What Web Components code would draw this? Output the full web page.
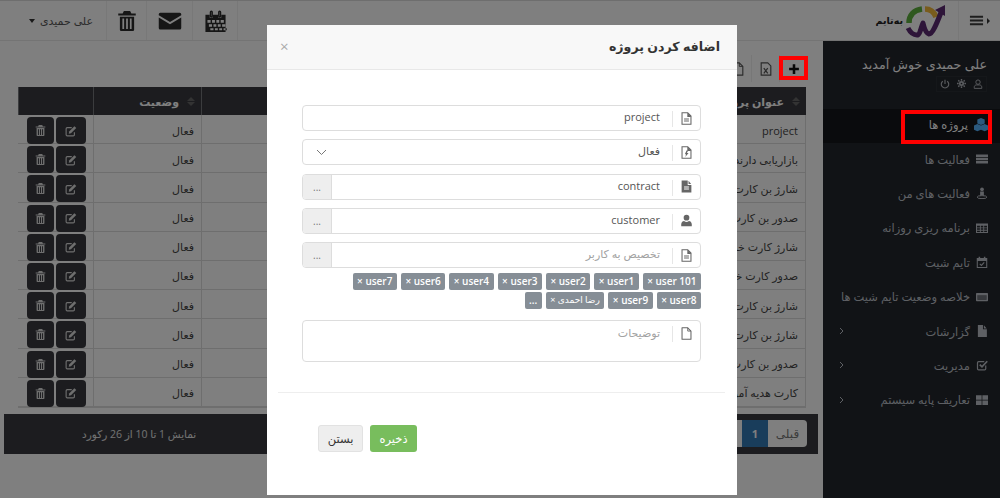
<!DOCTYPE html>
<html lang="fa">
<head>
<meta charset="utf-8">
<title>پروژه ها</title>
<style>
    html, body { margin: 0; height: 498px; overflow: hidden; }
    body {
        background: #fff;
        color: #333;
        font: 12px "Open Sans", "DejaVu Sans", sans-serif;
        direction: rtl;
        display: flex;
        flex-direction: column;
    }
    .layout { display: flex; flex: 1; min-height: 0; }
</style>
</head>
<body>
<top-bar></top-bar>
<div class="layout">
    <side-nav>
        <nav-item icon="cubes" active>پروژه ها</nav-item>
        <nav-item icon="tasks">فعالیت ها</nav-item>
        <nav-item icon="person">فعالیت های من</nav-item>
        <nav-item icon="table">برنامه ریزی روزانه</nav-item>
        <nav-item icon="calcheck">تایم شیت</nav-item>
        <nav-item icon="card">خلاصه وضعیت تایم شیت ها</nav-item>
        <nav-item icon="filled" arrow>گزارشات</nav-item>
        <nav-item icon="check" arrow>مدیریت</nav-item>
        <nav-item icon="grid" arrow>تعاریف پایه سیستم</nav-item>
    </side-nav>
    <main-panel>
        <data-table>
            <table-row>project</table-row>
            <table-row>بازاریابی دارندگان کارت</table-row>
            <table-row>شارژ بن کارت هدیه</table-row>
            <table-row>صدور بن کارت هدیه</table-row>
            <table-row>شارژ کارت خرید</table-row>
            <table-row>صدور کارت خرید</table-row>
            <table-row>شارژ بن کارت هدیه</table-row>
            <table-row>شارژ بن کارت هدیه</table-row>
            <table-row>صدور بن کارت هدیه</table-row>
            <table-row>کارت هدیه آموزش</table-row>
        </data-table>
    </main-panel>
</div>
<project-modal>
    <form-field icon="doc" value="project"></form-field>
    <form-field icon="docbolt" value="فعال" select></form-field>
    <form-field icon="docfill" value="contract" more></form-field>
    <form-field icon="user" value="customer" more></form-field>
    <form-field icon="doc" placeholder="تخصیص به کاربر" more></form-field>
    <tag-list>
        <tag-chip>× user 101</tag-chip>
        <tag-chip>× user1</tag-chip>
        <tag-chip>× user2</tag-chip>
        <tag-chip>× user3</tag-chip>
        <tag-chip>× user4</tag-chip>
        <tag-chip>× user6</tag-chip>
        <tag-chip>× user7</tag-chip>
        <tag-chip>× user8</tag-chip>
        <tag-chip>× user9</tag-chip>
        <tag-chip style="font-size:9px;font-weight:400">× رضا احمدی</tag-chip>
        <tag-chip>...</tag-chip>
    </tag-list>
    <form-field icon="page" placeholder="توضیحات" area></form-field>
</project-modal>
<red-mark x="779" y="56" w="29" h="24"></red-mark>
<red-mark x="901" y="110" w="91" h="34"></red-mark>

<script>
const ICONS = {
    calendar: '<path fill="currentColor" d="M1 4h3v2h2V4h4v2h2V4h3v12H1zM2.400 7.600v2h2.200v-2zm3.200 0v2h2v-2zm3 0v2h2v-2zm3 0v2h2.200v-2zm-8.200 3v1.800h2.200v-1.800zm3.200 0v1.800h2v-1.800zm3 0v1.800h2v-1.800zm3 0v1.800h2.200v-1.800zm-8.200 2.800v1.400h2.200v-1.400zm3.200 0v1.400h2v-1.400zm3 0v1.400h2v-1.400zm3 0v1.400h2.200v-1.400z"/><rect x="4.500" y="1.500" width="1.200" height="4" rx=".6" fill="none" stroke="currentColor"/><rect x="10.300" y="1.500" width="1.200" height="4" rx=".6" fill="none" stroke="currentColor"/>',
    mail: '<path fill="currentColor" d="M1.500 2.500h13a1 1 0 0 1 1 1v.6L8 8.700.5 4.100v-.6a1 1 0 0 1 1-1zM.5 5.600 8 10.200l7.500-4.600v7a1 1 0 0 1-1 1h-13a1 1 0 0 1-1-1z"/>',
    trash: '<path fill="currentColor" d="M5.500 0h5l1 2H15v1.600H1V2h3.500zM2.300 4.500h11.400V15a1 1 0 0 1-1 1H3.300a1 1 0 0 1-1-1zm2 1.500v8.400h1.400V6zm3 0v8.400h1.400V6zm3 0v8.400h1.400V6z"/>',
    bars: '<path fill="currentColor" d="M1 3h14v2H1zm0 4h14v2H1zm0 4h14v2H1z"/>',
    plus: '<path fill="currentColor" d="M6.300 1.500h3.400v4.800h4.800v3.400H9.700v4.800H6.300V9.700H1.500V6.300h4.800z"/>',
    xls: '<path fill="none" stroke="currentColor" stroke-width="1.300" d="M2.500 1h7.500l3.500 3.500V15h-11z"/><path fill="none" stroke="currentColor" stroke-width="1.400" d="M5.500 7l4.500 6M10 7l-4.500 6"/>',
    edit: '<path fill="none" stroke="currentColor" stroke-width="1.500" d="M12.500 9.500V13a1.500 1.500 0 0 1-1.500 1.500H3A1.500 1.500 0 0 1 1.500 13V5A1.500 1.500 0 0 1 3 3.500h6"/><path fill="currentColor" d="M12.500 1.500l2.500 2.500-7 7-3 .5.500-3z"/>',
    doc: '<path fill="none" stroke="currentColor" stroke-width="1.300" d="M2.500 1h7l4 4v10h-11z"/><path fill="currentColor" d="M9 1l5 5H9zM5 8h6v1.200H5zm0 2.500h6v1.200H5z"/>',
    docbolt: '<path fill="none" stroke="currentColor" stroke-width="1.300" d="M2.500 1h7l4 4v10h-11z"/><path fill="currentColor" d="M9 1l5 5H9zM8 5.500h2l-1.500 3h2L6.500 13.500l1-3.500H6z"/>',
    docfill: '<path fill="currentColor" d="M2 .5h7.500V6H14v9.500H2zM10.500.8 13.700 5h-3.200zM5 8v1.200h6V8zm0 2.500v1.200h6v-1.200z"/>',
    page: '<path fill="none" stroke="currentColor" stroke-width="1.300" stroke-linejoin="round" d="M2.500 1h7l4 4v10h-11z"/><path fill="none" stroke="currentColor" stroke-width="1.100" d="M9.500 1v4h4"/>',
    user: '<circle cx="8" cy="4.500" r="3.500" fill="currentColor"/><path fill="currentColor" d="M1.500 15v-2.500C1.500 10 3.500 8.500 5 8.500c1 .8 2 1.200 3 1.200s2-.4 3-1.200c1.500 0 3.500 1.500 3.500 4V15z"/>',
    userline: '<circle cx="8" cy="5" r="3.500" fill="none" stroke="currentColor" stroke-width="1.500"/><path fill="none" stroke="currentColor" stroke-width="1.500" d="M2 15v-2c0-2 1.500-3.500 3.500-3.500h5c2 0 3.500 1.500 3.500 3.500v2z"/>',
    gear: '<circle cx="8" cy="8" r="3" fill="none" stroke="currentColor" stroke-width="3"/><path stroke="currentColor" stroke-width="2.500" d="M8 0v3M8 13v3M0 8h3M13 8h3M2.300 2.300l2 2M11.700 11.700l2 2M13.700 2.300l-2 2M4.300 11.700l-2 2"/>',
    power: '<path fill="none" stroke="currentColor" stroke-width="1.800" d="M11.500 3.500a6 6 0 1 1-7 0M8 1v7"/>',
    cubes: '<path fill="currentColor" d="M8 0l4.200 1.800v4.400L8 8 3.800 6.200V1.800zM3.800 6.800l4.200 1.800v4.800L3.800 15.200-.2 13.400V8.600zM12.200 6.800l4 1.800v4.800l-4 1.800-4.200-1.800V8.600z"/>',
    tasks: '<path fill="currentColor" d="M0 2h16v3.400H0zm0 4.300h16v3.400H0zm0 4.300h16V14H0z"/>',
    person: '<circle cx="8" cy="3" r="2.500" fill="currentColor"/><path fill="currentColor" d="M5.500 6h5v5.500h-1.500v-1h-2v1H5.500z"/><ellipse cx="8" cy="13.500" rx="6.500" ry="2" fill="none" stroke="currentColor" stroke-width="1.300"/>',
    table: '<path fill="currentColor" d="M0 2h16v12.500H0zm1.400 3v2.200h3.800V5zm5 0v2.200h3.300V5zm4.500 0v2.200h3.700V5zM1.400 8.400v2h3.800v-2zm5 0v2h3.300v-2zm4.500 0v2h3.700v-2zM1.400 11.500v1.700h3.800v-1.700zm5 0v1.700h3.300v-1.700zm4.500 0v1.700h3.700v-1.700z"/>',
    calcheck: '<path fill="currentColor" d="M1 2.500h2.500V1h2v1.500h5V1h2v1.500H15V16H1zm1.400 4.300v7.800h11.200V6.800z"/><path fill="none" stroke="currentColor" stroke-width="1.500" d="M5 10.500l2.200 2 3.800-4"/>',
    card: '<path fill="currentColor" d="M1 2.500h14a1 1 0 0 1 1 1v9a1 1 0 0 1-1 1H1a1 1 0 0 1-1-1v-9a1 1 0 0 1 1-1zm1 3v6h12v-6z"/><path fill="currentColor" opacity=".5" d="M2 5.500h12v6H2z"/>',
    filled: '<path fill="currentColor" d="M2.500 0h6.800v5.700h5.200V16h-12zM10.500.3l3.800 4.200h-3.800z"/>',
    check: '<path fill="none" stroke="currentColor" stroke-width="1.600" d="M13 8.500V13a1.500 1.500 0 0 1-1.500 1.500h-8A1.500 1.500 0 0 1 2 13V5a1.500 1.500 0 0 1 1.500-1.500H11"/><path fill="none" stroke="currentColor" stroke-width="2.300" d="M5 7.500l3 3L15 3"/>',
    grid: '<path fill="currentColor" d="M0 1.500h7.500V7.500H0zm8.500 0H16V7.500H8.500zM0 8.500h7.500v6H0zm8.500 0H16v6H8.500z"/>'
};

// one svg glyph out of the table above
customElements.define('app-icon', class extends HTMLElement {
    connectedCallback() {
        const size = this.getAttribute('size') || 14;
        this.attachShadow({ mode: 'open' }).innerHTML = `
            <style>
                :host { display: inline-flex; flex: none; line-height: 0; }
            </style>
            <svg width="${size}" height="${size}" viewBox="0 0 16 16">${ICONS[this.getAttribute('name')] || ''}</svg>
        `;
    }
});

customElements.define('top-bar', class extends HTMLElement {
    constructor() {
        super();
        this.attachShadow({ mode: 'open' }).innerHTML = `
            <style>
                :host {
                    display: flex;
                    flex: none;
                    height: 39px;
                    background: #fff;
                    border-top: 1px solid #ddd;
                    border-bottom: 1px solid #e8e8e8;
                    color: #3c3c3c;
                }
                .burger {
                    width: 42px; box-sizing: border-box; display: flex; align-items: center; gap: 3px;
                    border-left: 1px solid #f0f0f0; padding-right: 10px;
                }
                .caret { border: 3px solid transparent; }
                .burger .caret { border-left-color: #333; border-right-width: 0; }
                .logo { display: flex; align-items: center; gap: 1px; margin-right: 12px; }
                .logo span { font-size: 9.500px; font-weight: 700; color: #222; }
                .tools { display: flex; margin-right: auto; }
                .tool {
                    display: flex; align-items: center; justify-content: center; box-sizing: border-box;
                    border-right: 1px solid #f0f0f0; color: #2c2c2c;
                }
                .me {
                    display: flex; align-items: center; gap: 5px; width: 107px;
                    box-sizing: border-box; padding-right: 13px;
                    border-right: 1px solid #f0f0f0; font-size: 11px; color: #555;
                }
                .me .caret { border-top: 4px solid #333; border-bottom-width: 0; }
            </style>
            <div class="burger"><i class="caret"></i><app-icon name="bars" size="15"></app-icon></div>
            <div class="logo">
                <svg width="42" height="34" viewBox="0 0 42 34">
                    <path fill="none" stroke="#5fb03f" stroke-width="5.500" d="M5 19C5 11 10 6 18 5"/>
                    <path fill="none" stroke="#f2b93a" stroke-width="5.500" d="M21 5c5 0 9 3 11 8"/>
                    <path fill="none" stroke="#5c2a72" stroke-width="5" stroke-linejoin="round" d="M4 24c2 4 5 7 9 7 3 0 4-8 6-12 1 4 2 10 6 11 4 0 9-14 13-24"/>
                    <path fill="#5c2a72" d="M31 6l10-5 0 11z"/>
                </svg>
                <span>به‌تایم</span>
            </div>
            <div class="tools">
                <div class="tool" style="width:45px"><app-icon name="calendar" size="23"></app-icon></div>
                <div class="tool" style="width:46px"><app-icon name="mail" size="24"></app-icon></div>
                <div class="tool" style="width:40px"><app-icon name="trash" size="20"></app-icon></div>
                <div class="me"><span>علی حمیدی</span><i class="caret"></i></div>
            </div>
        `;
    }
});

customElements.define('side-nav', class extends HTMLElement {
    constructor() {
        super();
        this.attachShadow({ mode: 'open' }).innerHTML = `
            <style>
                :host {
                    display: block;
                    flex: none;
                    width: 177px;
                    background: #23262c;
                    color: #d8dde4;
                }
                .who { padding: 14px 13px 0 0; height: 54px; }
                .who b { display: block; font-size: 12.700px; font-weight: 400; color: #fff; line-height: 18px; }
                .links {
                    display: inline-flex; gap: 7px; margin-top: 3px; padding: 2px 3px;
                    border: 1px solid #2b2e35; color: #b5b9c0;
                }
            </style>
            <div class="who">
                <b>علی حمیدی خوش آمدید</b>
                <div class="links">
                    <app-icon name="userline" size="10"></app-icon>
                    <app-icon name="gear" size="9"></app-icon>
                    <app-icon name="power" size="10"></app-icon>
                </div>
            </div>
            <slot></slot>
        `;
    }
});

customElements.define('nav-item', class extends HTMLElement {
    connectedCallback() {
        this.attachShadow({ mode: 'open' }).innerHTML = `
            <style>
                :host {
                    display: flex;
                    align-items: center;
                    gap: 6px;
                    height: 34.400px;
                    box-sizing: border-box;
                    padding: 0 12px 3px 0;
                    font-size: 11.500px;
                    color: #bcc0c8;
                }
                :host([active]) { background: #14161a; color: #fff; }
                :host([active]) app-icon { color: #56b4ff; }
                .arrow { margin-right: auto; margin-left: 16px; display: flex; }
            </style>
            <app-icon name="${this.getAttribute('icon')}" size="${this.hasAttribute('active') ? 14 : 12}"></app-icon>
            <slot></slot>
            ${this.hasAttribute('arrow') ? '<span class="arrow"><svg width="5" height="8" viewBox="0 0 5 8"><path fill="none" stroke="currentColor" d="M1 1l3 3-3 3"/></svg></span>' : ''}
        `;
    }
});

customElements.define('main-panel', class extends HTMLElement {
    constructor() {
        super();
        this.attachShadow({ mode: 'open' }).innerHTML = `
            <style>
                :host {
                    display: flex;
                    flex-direction: column;
                    flex: 1;
                    min-width: 0;
                    padding: 14px 5px 0 4px;
                }
                .bar { display: flex; height: 27px; margin: 0 11px 5px 0; }
                .btn {
                    width: 28px; box-sizing: border-box; display: flex; align-items: center; justify-content: center;
                    border-left: 1px solid #eee; color: #555;
                }
                .btn.add { color: #111; }
                .foot {
                    display: flex; align-items: center; justify-content: space-between;
                    height: 40px; margin-top: 6px; padding: 0 11px 0 0;
                    background: #38393f; color: #fff;
                }
                .pages { display: flex; height: 27px; border-radius: 4px; background: #fff; overflow: hidden; color: #333; }
                .pages span { display: flex; align-items: center; justify-content: center; }
                .pages .prev { width: 39px; color: #777; }
                .pages .cur { width: 26px; background: #337ab7; color: #fff; font-weight: 700; font-size: 11px; }
                .pages .next { width: 150px; }
                .info { margin-left: 78px; font-size: 10.500px; color: #e5e5e5; }
            </style>
            <div class="bar">
                <div class="btn add"><app-icon name="plus" size="12"></app-icon></div>
                <div class="btn"><app-icon name="xls" size="14"></app-icon></div>
                <div class="btn"><app-icon name="page" size="14"></app-icon></div>
            </div>
            <slot></slot>
            <div class="foot">
                <div class="pages"><span class="prev">قبلی</span><span class="cur">1</span><span class="next"></span></div>
                <span class="info">نمایش 1 تا 10 از 26 رکورد</span>
            </div>
        `;
    }
});

customElements.define('data-table', class extends HTMLElement {
    constructor() {
        super();
        this.attachShadow({ mode: 'open' }).innerHTML = `
            <style>
                :host { display: block; margin: 0 12px 0 14px; border-bottom: 1px solid #ddd; }
                .head {
                    display: grid;
                    grid-template-columns: 1fr 108px 75px;
                    height: 28px;
                    background: #38393f;
                    color: #fff;
                    font-weight: 700;
                    font-size: 11px;
                }
                .head div {
                    display: flex; align-items: center; gap: 8px; padding-right: 6px;
                    border-left: 1px solid #77787c;
                }
                .sort { display: inline-flex; flex-direction: column; gap: 1px; }
                .sort i { border: 4px solid transparent; border-top-width: 0; border-bottom: 4px solid #666; display: block; }
                .sort i + i { border-top: 4px solid #666; border-bottom-width: 0; }
            </style>
            <div class="head">
                <div><span class="sort"><i></i><i></i></span>عنوان پروژه</div>
                <div><span class="sort"><i></i><i></i></span>وضعیت</div>
                <div></div>
            </div>
            <slot></slot>
        `;
    }
});

customElements.define('table-row', class extends HTMLElement {
    constructor() {
        super();
        this.attachShadow({ mode: 'open' }).innerHTML = `
            <style>
                :host {
                    display: grid;
                    grid-template-columns: 1fr 108px 75px;
                    height: 29.200px;
                    box-sizing: border-box;
                    border-bottom: 1px solid #ddd;
                    font-size: 11px;
                    color: #444;
                }
                .cell {
                    display: flex; align-items: center; padding: 1px 7px 0 0;
                    border-left: 1px solid #ddd; white-space: nowrap; overflow: hidden;
                }
                .first { border-right: 1px solid #ddd; }
                .acts { display: flex; gap: 2px; padding: 2px 7px 0 0; }
                .acts span {
                    display: flex; align-items: center; justify-content: center;
                    height: 27px; background: #38393f; color: #ddd; border-radius: 4px;
                }
                .acts .e { width: 30px; }
                .acts .d { width: 27px; }
            </style>
            <div class="cell first"><slot></slot></div>
            <div class="cell">فعال</div>
            <div class="acts">
                <span class="e"><app-icon name="edit" size="12"></app-icon></span>
                <span class="d"><app-icon name="trash" size="11"></app-icon></span>
            </div>
        `;
    }
});

// dialog over the page, backdrop takes the whole window
customElements.define('project-modal', class extends HTMLElement {
    constructor() {
        super();
        this.attachShadow({ mode: 'open' }).innerHTML = `
            <style>
                :host {
                    position: fixed;
                    inset: 0;
                    background: rgba(0, 0, 0, .5);
                    display: block;
                }
                .box {
                    position: absolute;
                    left: 267px;
                    top: 25px;
                    width: 470px;
                    height: 470px;
                    background: #fff;
                    display: flex;
                    flex-direction: column;
                }
                .head {
                    display: flex; align-items: center; justify-content: space-between;
                    height: 45px; box-sizing: border-box; padding: 0 17px 2px 13px;
                    background: #f8f8f8; border-bottom: 1px solid #e8e8e8;
                }
                .head b { font-size: 12.600px; font-weight: 700; color: #333; }
                .head span { font-size: 15px; color: #aaa; }
                .form {
                    display: flex; flex-direction: column; gap: 8.300px;
                    padding: 35px 36px 0 35px; height: 322px; box-sizing: border-box;
                }
                hr { margin: 0 12px 0 11px; border: 0; border-top: 1px solid #eee; }
                .foot { display: flex; gap: 7px; padding: 32px 51px 0; }
                .btn {
                    display: flex; align-items: center; justify-content: center;
                    height: 27px; border-radius: 3px; font-size: 11.500px;
                }
                .save { width: 47px; background: #78bd5d; color: #fff; order: 2; }
                .close { width: 45px; background: #eee; color: #333; border: 1px solid #e2e2e2; box-sizing: border-box; order: 1; }
            </style>
            <div class="box" dir="rtl">
                <div class="head"><b>اضافه کردن پروژه</b><span>×</span></div>
                <div class="form"><slot></slot></div>
                <hr>
                <div class="foot" dir="ltr">
                    <div class="btn save">ذخیره</div>
                    <div class="btn close">بستن</div>
                </div>
            </div>
        `;
    }
});

customElements.define('form-field', class extends HTMLElement {
    connectedCallback() {
        const value = this.getAttribute('value');
        const hint = this.getAttribute('placeholder');
        const area = this.hasAttribute('area');
        this.attachShadow({ mode: 'open' }).innerHTML = `
            <style>
                :host {
                    display: flex;
                    height: ${area ? 42 : 26}px;
                    box-sizing: border-box;
                    border: 1px solid #ddd;
                    border-radius: 4px;
                    font-size: 11px;
                    color: #555;
                    overflow: hidden;
                    flex: none;
                    ${area ? 'margin-top: 2px;' : ''}
                }
                .ic {
                    width: 28px; flex: none; display: flex; justify-content: center;
                    align-items: ${area ? 'flex-start' : 'center'}; ${area ? 'padding-top: 6px;' : ''}
                    color: #666; position: relative;
                }
                .ic::after {
                    content: ""; position: absolute; left: 0; top: 5px; height: 16px;
                    border-left: 1px solid #e6e6e6;
                }
                .val {
                    flex: 1; padding: ${area ? '3px' : '0'} 12px 0 0; line-height: ${area ? 18 : 21}px;
                    ${hint ? 'color: #a2a2a2;' : ''}
                }
                .chev { width: 36px; display: flex; align-items: center; justify-content: center; }
                .more {
                    width: 28px; flex: none; background: #eee; border-right: 1px solid #ddd;
                    display: flex; align-items: center; justify-content: center; color: #777; font-size: 10px;
                }
            </style>
            <div class="ic"><app-icon name="${this.getAttribute('icon')}" size="13"></app-icon></div>
            <div class="val">${value || hint}</div>
            ${this.hasAttribute('select') ? '<div class="chev"><svg width="11" height="7" viewBox="0 0 11 7"><path fill="none" stroke="#777" d="M1 1l4.500 4.500L10 1"/></svg></div>' : ''}
            ${this.hasAttribute('more') ? '<div class="more">...</div>' : ''}
        `;
    }
});

customElements.define('tag-list', class extends HTMLElement {
    constructor() {
        super();
        this.attachShadow({ mode: 'open' }).innerHTML = `
            <style>
                :host {
                    display: flex; flex-wrap: wrap; gap: 2px 4px;
                    margin: -3px 0 0 29px;
                }
            </style>
            <slot></slot>
        `;
    }
});

customElements.define('tag-chip', class extends HTMLElement {
    constructor() {
        super();
        this.attachShadow({ mode: 'open' }).innerHTML = `
            <style>
                :host {
                    display: block;
                    height: 17px;
                    line-height: 16px;
                    padding: 0 4.500px;
                    background: #868e96;
                    color: #fff;
                    border-radius: 2px;
                    font-size: 10px;
                    font-weight: 600;
                    direction: ltr;
                    white-space: nowrap;
                }
            </style>
            <slot></slot>
        `;
    }
});

// annotation boxes drawn on the screenshot, above the dimmed page
customElements.define('red-mark', class extends HTMLElement {
    connectedCallback() {
        const a = n => this.getAttribute(n);
        this.attachShadow({ mode: 'open' }).innerHTML = `
            <style>
                :host {
                    position: fixed;
                    left: ${a('x')}px; top: ${a('y')}px;
                    width: ${a('w')}px; height: ${a('h')}px;
                    box-sizing: border-box;
                    border: 4px solid #f00;
                }
            </style>
        `;
    }
});
</script>
</body>
</html>
